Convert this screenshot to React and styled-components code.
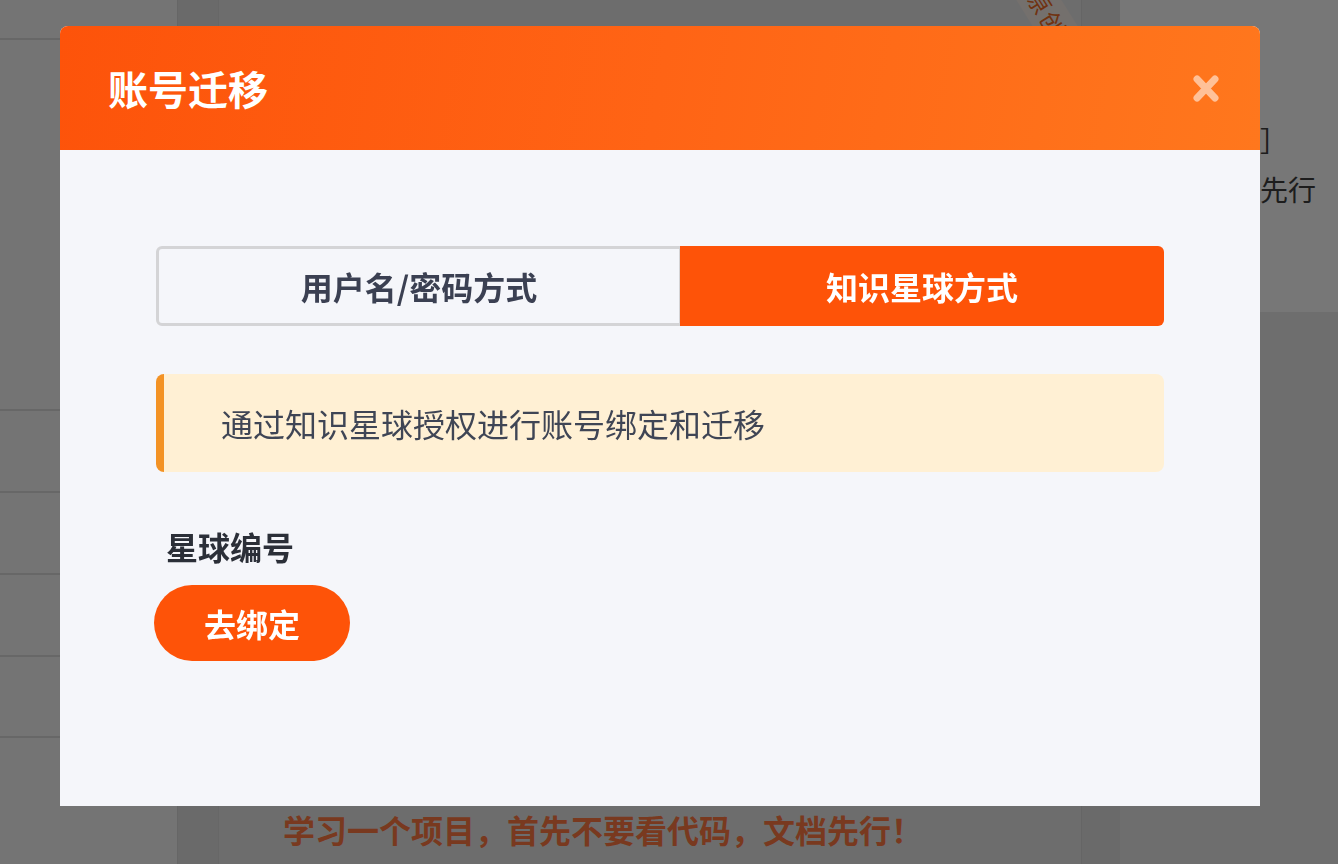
import React from "react";
import styled, { createGlobalStyle } from "styled-components";

const GlobalStyle = createGlobalStyle`
  * { box-sizing: border-box; }
  html, body { margin: 0; padding: 0; }
  body {
    font-family: "Noto Sans CJK SC", "Noto Sans", sans-serif;
    background: #d5d5d5;
    overflow: hidden;
  }
`;

/* ---------- underlying page ---------- */
const Page = styled.div`
  display: flex;
  width: 1338px;
  height: 864px;
  overflow: hidden;
  background: #d5d5d5;
`;

const Sidebar = styled.aside`
  width: 178px;
  flex: none;
  background: #e9e9e9;
  border-right: 1px solid #cdcdcd;
  display: flex;
  flex-direction: column;
`;

const SideRow = styled.div`
  height: ${(p) => p.$h}px;
  flex: none;
  border-bottom: 2px solid #cfcfcf;
`;

const Main = styled.main`
  position: relative;
  width: 864px;
  margin-left: 40px;
  flex: none;
  background: #dbdbdb;
  border-left: 1px solid #cfcfcf;
  border-right: 1px solid #cbcbcb;
  overflow: hidden;
  display: flex;
  flex-direction: column;
  padding: 0 64px;
`;

const ArticleBody = styled.div`
  height: 806px;
  flex: none;
`;

const Headline = styled.h2`
  margin: 0;
  font-size: 32px;
  line-height: 46px;
  font-weight: 700;
  color: #f2733f;
  white-space: nowrap;
`;

const Ribbon = styled.div`
  position: absolute;
  top: -6px;
  right: -26px;
  width: 120px;
  height: 38px;
  background: #e9e0da;
  color: #e0641f;
  font-size: 24px;
  line-height: 38px;
  text-align: center;
  transform: rotate(58deg);
  transform-origin: center;
  letter-spacing: 2px;
`;

const RightColumn = styled.div`
  flex: 1;
  margin-left: 38px;
  display: flex;
  flex-direction: column;
  background: #dcdcdc;
`;

const RightCard = styled.div`
  height: 312px;
  background: #eeeeee;
  padding-top: 116px;
  display: flex;
  flex-direction: column;
`;

const RightLine = styled.div`
  font-size: 28px;
  line-height: 49px;
  color: #3a3a3a;
  white-space: nowrap;
`;

/* ---------- modal ---------- */
const Overlay = styled.div`
  position: fixed;
  inset: 0;
  background: rgba(0, 0, 0, 0.5);
  padding: 26px 0 0 60px;
`;

const Modal = styled.div`
  width: 1200px;
  height: 780px;
  background: #f5f6fa;
  border-radius: 8px 8px 0 0;
  overflow: hidden;
  display: flex;
  flex-direction: column;
`;

const Header = styled.header`
  height: 124px;
  flex: none;
  display: flex;
  align-items: center;
  justify-content: space-between;
  padding: 0 41px 0 48px;
  background: linear-gradient(100deg, #fd530a 0%, #ff6415 50%, #ff771d 100%);
`;

const Title = styled.h1`
  margin: 0;
  font-size: 40px;
  line-height: 56px;
  font-weight: 700;
  color: #ffffff;
`;

const CloseButton = styled.button`
  border: 0;
  padding: 0;
  background: transparent;
  width: 26px;
  height: 27px;
  display: flex;
  cursor: pointer;
`;

const Body = styled.div`
  padding: 96px 96px;
  display: flex;
  flex-direction: column;
  align-items: flex-start;
`;

const Tabs = styled.div`
  width: 1008px;
  height: 80px;
  display: flex;
`;

const Tab = styled.div`
  flex: 0 0 ${(p) => p.$w}px;
  display: flex;
  align-items: center;
  justify-content: center;
  font-size: 32px;
  font-weight: 700;
  color: ${(p) => (p.$active ? "#ffffff" : "#3b4052")};
  background: ${(p) => (p.$active ? "#fe5308" : "#f5f6fa")};
  border: ${(p) => (p.$active ? "0" : "3px solid #d4d4d6")};
  border-right: ${(p) => (p.$active ? "0" : "1px solid #d4d4d6")};
  border-radius: ${(p) => (p.$first ? "6px 0 0 6px" : "0 6px 6px 0")};
`;

const Notice = styled.div`
  margin-top: 48px;
  width: 1008px;
  height: 98px;
  display: flex;
  align-items: center;
  padding-left: 57px;
  background: #fff0d4;
  border-left: 8px solid #f39224;
  border-radius: 8px;
  font-size: 32px;
  color: #3f4555;
`;

const FieldLabel = styled.div`
  margin-top: 50px;
  padding-left: 10px;
  font-size: 32px;
  line-height: 48px;
  font-weight: 700;
  color: #2b2f38;
`;

const PrimaryButton = styled.button`
  margin-top: 15px;
  margin-left: -2px;
  width: 196px;
  height: 76px;
  border: 0;
  border-radius: 38px;
  background: #fe5308;
  color: #ffffff;
  font-family: inherit;
  font-size: 32px;
  font-weight: 700;
  cursor: pointer;
`;

export default function App() {
  return (
    <>
      <GlobalStyle />
      <Page>
        <Sidebar>
          <SideRow $h={40} />
          <SideRow $h={371} />
          <SideRow $h={82} />
          <SideRow $h={82} />
          <SideRow $h={82} />
          <SideRow $h={81} />
        </Sidebar>
        <Main>
          <Ribbon>原创</Ribbon>
          <ArticleBody />
          <Headline>学习一个项目，首先不要看代码，文档先行！</Headline>
        </Main>
        <RightColumn>
          <RightCard>
            <RightLine>［推荐项目］</RightLine>
            <RightLine>学习项目要先行</RightLine>
          </RightCard>
        </RightColumn>
      </Page>
      <Overlay>
        <Modal>
          <Header>
            <Title>账号迁移</Title>
            <CloseButton aria-label="关闭">
              <svg width="26" height="27" viewBox="0 0 26 27">
                <path
                  d="M4 4 L22 23 M22 4 L4 23"
                  stroke="rgba(255,255,255,0.55)"
                  strokeWidth="7"
                  strokeLinecap="round"
                  fill="none"
                />
              </svg>
            </CloseButton>
          </Header>
          <Body>
            <Tabs>
              <Tab $first $w={524}>用户名/密码方式</Tab>
              <Tab $active $w={484}>知识星球方式</Tab>
            </Tabs>
            <Notice>通过知识星球授权进行账号绑定和迁移</Notice>
            <FieldLabel>星球编号</FieldLabel>
            <PrimaryButton>去绑定</PrimaryButton>
          </Body>
        </Modal>
      </Overlay>
    </>
  );
}
